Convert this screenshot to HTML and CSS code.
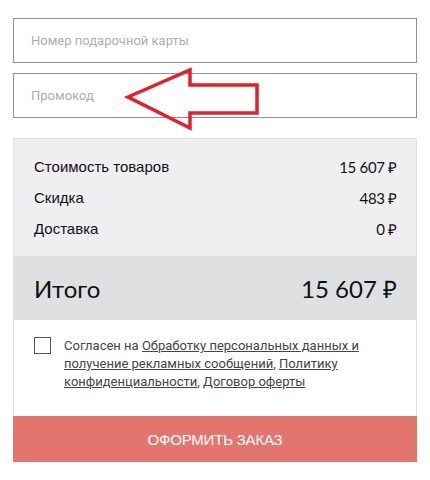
FILE: index.html
```html
<!DOCTYPE html>
<html lang="ru">
<head>
<meta charset="utf-8">
<link rel="stylesheet" href="styles.css">
</head>
<body>
<div class="wrap">
  <div class="field"><input class="input" type="text" placeholder="Номер подарочной карты"></div>
  <div class="field promo">
    <input class="input" type="text" placeholder="Промокод">
    <svg class="arrow" width="150" height="70" viewBox="0 0 150 70">
      <polygon points="10,32 72,5 72,20 139,20 139,48 72,48 72,63" fill="none" stroke="#e3202a" stroke-width="3.5" stroke-linejoin="miter"/>
    </svg>
  </div>
  <div class="panel">
    <div class="rows">
      <div class="row"><span class="label">Стоимость товаров</span><span class="value">15 607 ₽</span></div>
      <div class="row"><span class="label">Скидка</span><span class="value">483 ₽</span></div>
      <div class="row"><span class="label">Доставка</span><span class="value">0 ₽</span></div>
    </div>
    <div class="total"><span>Итого</span><span>15 607 ₽</span></div>
    <div class="agree">
      <span class="check"></span>
      <p class="agree-text">Согласен на <a href="#">Обработку персональных данных и получение рекламных сообщений</a>, <a href="#">Политику конфиденциальности</a>, <a href="#">Договор оферты</a></p>
    </div>
    <button class="submit">ОФОРМИТЬ ЗАКАЗ</button>
  </div>
</div>
</body>
</html>
```
FILE: styles.css
```css
html, body {
  margin: 0;
  padding: 0;
  background: #fff;
}
.wrap {
  width: 404px;
  margin: 18px 0 0 13px;
  display: flex;
  flex-direction: column;
}
.field {
  position: relative;
  margin-bottom: 10px;
}
.field.promo {
  margin-bottom: 20px;
}
.input {
  display: block;
  box-sizing: border-box;
  width: 404px;
  height: 45px;
  border: 1px solid #8e9093;
  padding: 0 0 0 17px;
  margin: 0;
  font-family: Roboto, "Liberation Sans", sans-serif;
  font-size: 13px;
  color: #333;
  background: #fff;
  outline: none;
}
.input::placeholder {
  color: #aeaeae;
}
.arrow {
  position: absolute;
  left: 105px;
  top: -8px;
}
.panel {
  border: 1px solid #e2e2e4;
  border-bottom: none;
  display: flex;
  flex-direction: column;
}
.rows {
  background: #efeff1;
  padding: 12px 19px 12px 20px;
}
.row {
  display: flex;
  justify-content: space-between;
  align-items: center;
  height: 31px;
  font-size: 15px;
  color: #111;
}
.label {
  font-family: "Liberation Sans", Arial, sans-serif;
}
.value {
  font-family: Lato, "Liberation Sans", sans-serif;
  letter-spacing: -0.3px;
}
.total {
  background: #dfe0e2;
  height: 64px;
  display: flex;
  justify-content: space-between;
  align-items: center;
  padding: 0 19px 0 20px;
  font-family: Lato, "Liberation Sans", sans-serif;
  font-size: 24px;
  color: #111;
}
.agree {
  background: #fff;
  display: flex;
  align-items: flex-start;
  padding: 17px 20px 25px 20px;
}
.check {
  flex: none;
  width: 15px;
  height: 15px;
  border: 1px solid #555;
  margin-right: 13px;
  margin-top: 0;
}
.agree-text {
  margin: 0;
  font-family: Roboto, "Liberation Sans", sans-serif;
  font-size: 13px;
  line-height: 18px;
  color: #444;
  width: 300px;
}
.agree-text a {
  color: #444;
  text-decoration: underline;
}
.submit {
  margin: 0 -1px;
  width: 404px;
  height: 46px;
  border: none;
  background: #e2766f;
  color: #fff;
  font-family: "Liberation Sans", Arial, sans-serif;
  font-size: 15px;
  letter-spacing: -0.2px;
  cursor: pointer;
}
```
